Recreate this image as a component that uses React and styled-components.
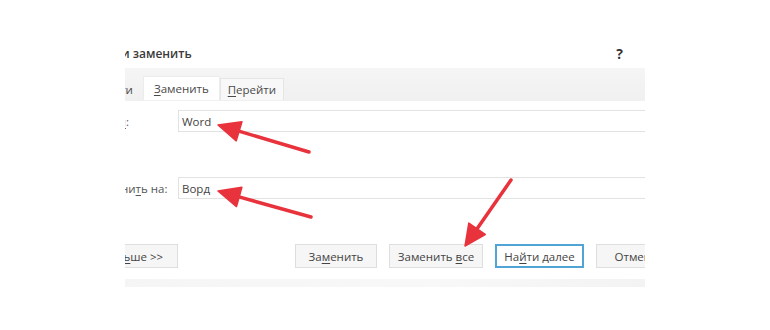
import styled, { createGlobalStyle } from 'styled-components'

const GlobalStyle = createGlobalStyle`
    html, body {
        margin: 0;
        background: #ffffff;
    }
    body {
        font-family: "Open Sans", "Noto Sans", sans-serif;
        font-size: 11.5px;
        color: #4a4a4a;
    }
`

const Page = styled.div`
    position: relative;
    width: 770px;
    height: 330px;
`

const Frame = styled.div`
    width: 520px;
    margin-left: 125px;
    padding-top: 44px;
    overflow: hidden;
    display: flex;
    flex-direction: column;
`

const TitleBar = styled.div`
    display: flex;
    justify-content: space-between;
    align-items: center;
    height: 18px;
`

const Title = styled.div`
    margin-left: -45px;
    font-size: 12px;
    font-weight: 600;
    color: #3a3a3a;
    white-space: nowrap;
`

const Help = styled.div`
    margin-right: 22px;
    font-size: 14px;
    font-weight: 700;
    color: #333;
`

const TabStrip = styled.div`
    margin-top: 6px;
    height: 33px;
    background: linear-gradient(#f5f5f5, #f0f0f0);
    display: flex;
    align-items: flex-end;
    padding-bottom: 1px;
    box-sizing: border-box;
`

const Tab = styled.div`
    height: ${p => (p.$active ? 24 : 22)}px;
    box-sizing: border-box;
    display: flex;
    align-items: center;
    padding: 0 ${p => p.$pad || 12}px;
    margin-left: ${p => p.$offset || 0}px;
    white-space: nowrap;
    flex-shrink: 0;
    color: #4a4a4a;
    background: ${p => (p.$active ? '#ffffff' : p.$plain ? 'transparent' : '#f8f8f8')};
    border: 1px solid ${p => (p.$active ? '#ececec' : p.$plain ? 'transparent' : '#e6e6e6')};
    border-bottom: none;
`

const Acc = styled.span`
    text-decoration: underline;
    text-underline-offset: 2px;
`

const Row = styled.div`
    display: flex;
    align-items: center;
    height: 22px;
    margin-top: ${p => p.$top}px;
`

const Label = styled.div`
    margin-left: ${p => p.$offset}px;
    width: ${p => 178 - 125 - p.$offset}px;
    flex-shrink: 0;
    white-space: nowrap;
    color: #555;
`

const Field = styled.div`
    flex: 1;
    height: 22px;
    margin-right: -10px;
    box-sizing: border-box;
    border: 1px solid #e2e2e2;
    padding-left: 3px;
    display: flex;
    align-items: center;
    color: #444;
`

const ButtonRow = styled.div`
    display: flex;
    align-items: center;
    margin-top: 45px;
    height: 24px;
`

const ButtonGroup = styled.div`
    display: flex;
    gap: 12px;
    margin-left: 117px;
    flex-shrink: 0;
`

const Button = styled.div`
    width: ${p => p.$w}px;
    height: 24px;
    margin-left: ${p => p.$offset || 0}px;
    flex-shrink: 0;
    box-sizing: border-box;
    display: flex;
    align-items: center;
    justify-content: ${p => (p.$start ? 'flex-start' : 'center')};
    padding-left: ${p => (p.$start ? 10 : 0)}px;
    white-space: nowrap;
    color: #444;
    background: ${p => (p.$primary ? '#ffffff' : '#f6f6f6')};
    border: ${p => (p.$primary ? '2px solid #52a3d6' : '1px solid #dedede')};
`

const Band = styled.div`
    margin-top: 11px;
    height: 8px;
    background: linear-gradient(90deg, #f5f5f5, #f8f8f8 60%, #f3f3f3);
`

const Overlay = styled.svg`
    position: absolute;
    top: 0;
    left: 0;
    pointer-events: none;
`

const RED = '#e8333d'

const Arrow = ({ tail, tip, len = 22, half = 10 }) => {
    const dx = tip[0] - tail[0]
    const dy = tip[1] - tail[1]
    const d = Math.hypot(dx, dy)
    const ux = dx / d
    const uy = dy / d
    const bx = tip[0] - ux * len
    const by = tip[1] - uy * len
    const nx = -uy * half
    const ny = ux * half
    const pts = `${tip[0]},${tip[1]} ${bx + nx},${by + ny} ${bx - nx},${by - ny}`
    return (
        <g>
            <line x1={tail[0]} y1={tail[1]} x2={bx + ux * 2} y2={by + uy * 2}
                stroke={RED} strokeWidth="3.5" strokeLinecap="round" />
            <polygon points={pts} fill={RED} stroke={RED} strokeWidth="1.5" strokeLinejoin="round" />
        </g>
    )
}

const App = () => {
    return (
        <Page>
            <GlobalStyle />
            <Frame>
                <TitleBar>
                    <Title>Найти и заменить</Title>
                    <Help>?</Help>
                </TitleBar>
                <TabStrip>
                    <Tab $plain $offset={-37} $pad={9}><span>Найти</span></Tab>
                    <Tab $active $pad={10}><span><Acc>З</Acc>аменить</span></Tab>
                    <Tab $pad={7}><span><Acc>П</Acc>ерейти</span></Tab>
                </TabStrip>
                <Row $top={9}>
                    <Label $offset={-34}>Найт<Acc>и</Acc>:</Label>
                    <Field>Word</Field>
                </Row>
                <Row $top={45}>
                    <Label $offset={-32}>Замени<Acc>т</Acc>ь на:</Label>
                    <Field>Ворд</Field>
                </Row>
                <ButtonRow>
                    <Button $w={86} $offset={-33} $start><span>Бол<Acc>ь</Acc>ше &gt;&gt;</span></Button>
                    <ButtonGroup>
                        <Button $w={82}><span>За<Acc>м</Acc>енить</span></Button>
                        <Button $w={94}><span>Заменить <Acc>в</Acc>се</span></Button>
                        <Button $w={89} $primary><span>На<Acc>й</Acc>ти далее</span></Button>
                        <Button $w={80}><span>Отмена</span></Button>
                    </ButtonGroup>
                </ButtonRow>
                <Band />
            </Frame>
            <Overlay width="770" height="330" viewBox="0 0 770 330">
                <Arrow tail={[309, 152]} tip={[218, 125]} />
                <Arrow tail={[311, 217]} tip={[218, 191]} />
                <Arrow tail={[511, 180]} tip={[465, 246]} len={21} />
            </Overlay>
        </Page>
    )
}

export default App
